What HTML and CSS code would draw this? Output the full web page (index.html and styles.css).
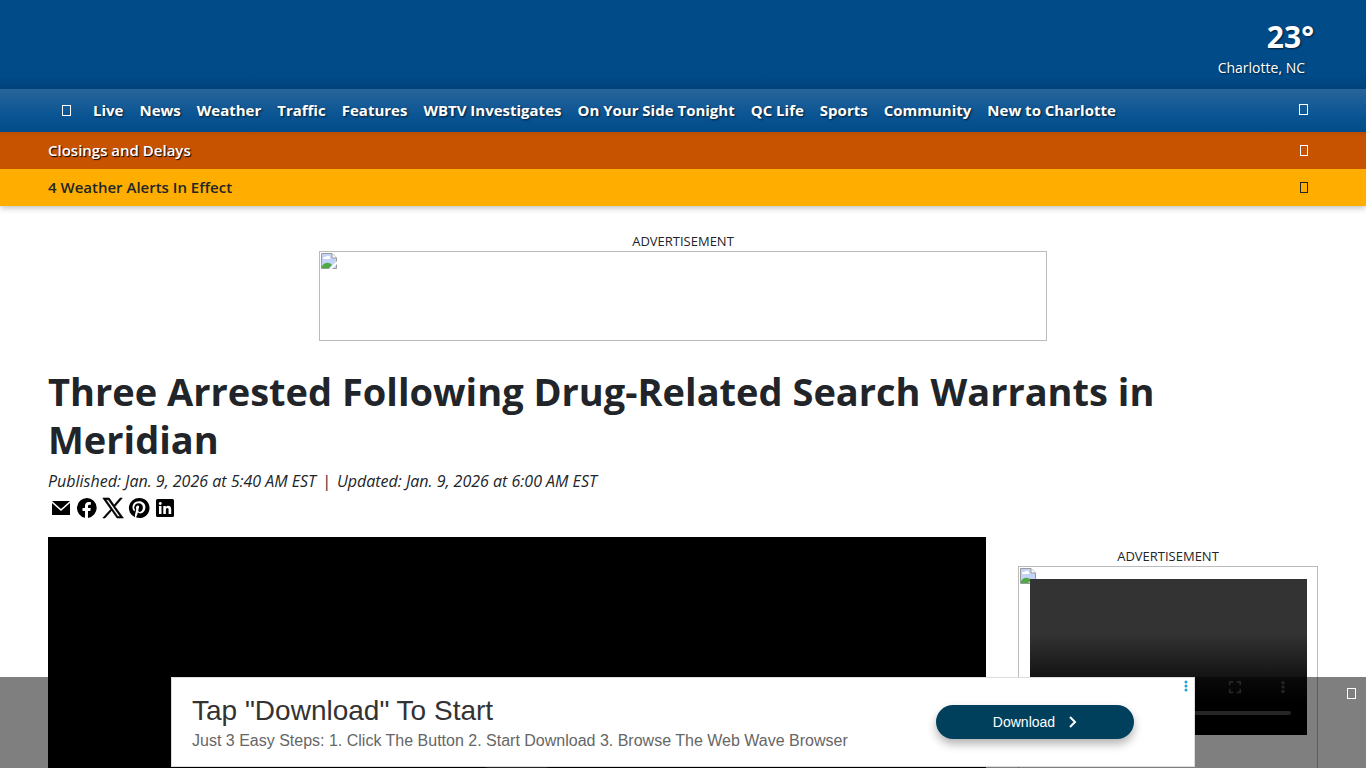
FILE: index.html
```html
<!DOCTYPE html>
<html lang="en">
<head>
  <meta charset="UTF-8">
  <meta name="viewport" content="width=device-width, initial-scale=1.0">
  <title>Three Arrested Following Drug-Related Search Warrants in Meridian</title>
  <link rel="stylesheet" href="styles.css">
</head>
<body>
  <!-- Header Section -->
  <header class="site-header">
    <div class="masthead">
      <a href="#" class="weather">
        <span class="temp">23°</span>
        <span class="city">Charlotte, NC</span>
      </a>
    </div>
    <nav class="navbar">
      <button class="icon-btn menu-btn" aria-label="Menu"><span class="glyph"></span></button>
      <div class="nav-links">
        <a href="#">Live</a>
        <a href="#">News</a>
        <a href="#">Weather</a>
        <a href="#">Traffic</a>
        <a href="#">Features</a>
        <a href="#">WBTV Investigates</a>
        <a href="#">On Your Side Tonight</a>
        <a href="#">QC Life</a>
        <a href="#">Sports</a>
        <a href="#">Community</a>
        <a href="#">New to Charlotte</a>
      </div>
      <button class="icon-btn search-btn" aria-label="Search"><span class="glyph"></span></button>
    </nav>
    <a href="#" class="alert closings">
      <span>Closings and Delays</span>
      <span class="glyph small"></span>
    </a>
    <a href="#" class="alert weather-alert">
      <span>4 Weather Alerts In Effect</span>
      <span class="glyph small"></span>
    </a>
  </header>

  <main class="page">
    <section class="ad leaderboard">
      <div class="ad-label">ADVERTISEMENT</div>
      <div class="ad-box">
        <svg class="broken" viewBox="0 0 16 16" aria-hidden="true">
          <path d="M0.500 0.500H11L15.500 5V15.500H0.500Z" fill="#c5d4f6" stroke="#9a9a9a"/>
          <path d="M2 6a2 2 0 0 1 3-2 2 2 0 0 1 4 2z" fill="#fff"/>
          <path d="M1 15v-2c3-4 7-4 10-1l-3 3z" fill="#4fa943"/>
          <path d="M11 0.500V5h4.500" fill="#fff" stroke="#9a9a9a"/>
          <path d="M8 16l8-8v3l-5 5z" fill="#fff"/>
        </svg>
      </div>
    </section>

    <h1>Three Arrested Following Drug-Related Search Warrants in Meridian</h1>
    <p class="byline"><span>Published: Jan. 9, 2026 at 5:40 AM EST</span><span class="divider">|</span><span>Updated: Jan. 9, 2026 at 6:00 AM EST</span></p>

    <div class="share">
      <a href="#" aria-label="Email">
        <svg viewBox="0 0 24 24"><path d="M3 5h18L12 13z"/><path d="M3 7l9 8 9-8v12H3z"/></svg>
      </a>
      <a href="#" aria-label="Facebook">
        <svg viewBox="0 0 24 24"><path d="M12 2a10 10 0 0 0-2 19.800V15H7.500v-3H10V9.800C10 7.300 11.500 6 13.700 6c1.100 0 2.200.2 2.200.2v2.500h-1.300c-1.200 0-1.600.7-1.600 1.500V12h2.800l-.5 3H13v6.900A10 10 0 0 0 12 2z"/></svg>
      </a>
      <a href="#" aria-label="X">
        <svg viewBox="0 0 24 24"><path stroke="#000" stroke-width=".6" d="M14 10.500 21.300 2h-2.200l-6 7.100L8.200 2H1.800l7.900 11.300L1.800 22H4l6.700-7.600L16 22h6.400zM5 3.700h2.300L19.100 20.400h-2.300z"/></svg>
      </a>
      <a href="#" aria-label="Pinterest">
        <svg viewBox="0 0 24 24"><path d="M12 2a10 10 0 0 0-4 19.200c-.1-.8-.1-2 .1-2.900l1.200-5s-.3-.6-.3-1.500c0-1.400.8-2.400 1.800-2.400.9 0 1.300.6 1.300 1.400 0 .9-.5 2.100-.8 3.300-.3 1 .5 1.800 1.500 1.800 1.800 0 3.100-1.900 3.100-4.600 0-2.400-1.700-4.100-4.200-4.100-2.800 0-4.500 2.100-4.500 4.300 0 .9.300 1.800.8 2.300l-.4 1.500c-1.300-.6-2.100-2.400-2.100-3.900 0-3.200 2.300-6.100 6.700-6.100 3.500 0 6.200 2.500 6.200 5.800 0 3.500-2.200 6.300-5.200 6.300-1 0-2-.5-2.300-1.200l-.7 2.500c-.2.900-.9 1.900-1.300 2.600A10 10 0 1 0 12 2z"/></svg>
      </a>
      <a href="#" aria-label="LinkedIn">
        <svg viewBox="0 0 24 24"><path fill-rule="evenodd" d="M4.500 3h15A1.500 1.500 0 0 1 21 4.500v15a1.500 1.500 0 0 1-1.500 1.500h-15A1.500 1.500 0 0 1 3 19.500v-15A1.500 1.500 0 0 1 4.500 3zM6 10v8h2.500v-8zM7.200 6a1.500 1.500 0 1 0 .1 3 1.500 1.500 0 0 0-.1-3zM10.300 10v8h2.600v-4c0-1.100.4-1.900 1.400-1.900s1.300.9 1.300 1.900v4h2.600v-4.500c0-2.400-1-3.700-2.900-3.700-1.200 0-2 .6-2.400 1.300V10z"/></svg>
      </a>
    </div>

    <div class="columns">
      <article class="story">
        <div class="player">
          <button class="play" aria-label="Play"></button>
        </div>
      </article>

      <aside class="ad rail">
        <div class="ad-label">ADVERTISEMENT</div>
        <div class="ad-box">
          <svg class="broken" viewBox="0 0 16 16" aria-hidden="true">
            <path d="M0.500 0.500H11L15.500 5V15.500H0.500Z" fill="#c5d4f6" stroke="#9a9a9a"/>
            <path d="M2 6a2 2 0 0 1 3-2 2 2 0 0 1 4 2z" fill="#fff"/>
            <path d="M1 15v-2c3-4 7-4 10-1l-3 3z" fill="#4fa943"/>
            <path d="M11 0.500V5h4.500" fill="#fff" stroke="#9a9a9a"/>
          </svg>
          <div class="mini-player">
            <div class="controls">
              <svg viewBox="0 0 16 16"><path d="M2 6V2h4M10 2h4v4M14 10v4h-4M6 14H2v-4" fill="none" stroke="#4a4a4a" stroke-width="2"/></svg>
              <svg viewBox="0 0 16 16" fill="#4a4a4a"><circle cx="8" cy="3" r="2"/><circle cx="8" cy="8" r="2"/><circle cx="8" cy="13" r="2"/></svg>
            </div>
            <div class="track"></div>
          </div>
        </div>
      </aside>
    </div>
  </main>

  <!-- Sticky banner -->
  <div class="sticky-ad">
    <div class="banner">
      <div class="banner-text">
        <div class="banner-title">Tap "Download" To Start</div>
        <div class="banner-sub">Just 3 Easy Steps: 1. Click The Button 2. Start Download 3. Browse The Web Wave Browser</div>
      </div>
      <button class="download">
        Download
        <svg viewBox="0 0 8 12"><path d="M1 1l5 5-5 5" fill="none" stroke="#fff" stroke-width="2"/></svg>
      </button>
      <svg class="ad-choices" viewBox="0 0 4 12"><circle cx="2" cy="2" r="1.500"/><circle cx="2" cy="6" r="1.500"/><circle cx="2" cy="10" r="1.500"/></svg>
    </div>
    <button class="close-btn" aria-label="Close"><span class="glyph"></span></button>
  </div>
</body>
</html>
```
FILE: styles.css
```css
* {
  box-sizing: border-box;
}
html {
  scrollbar-width: none;
}
body {
  margin: 0;
  font-family: "Open Sans", "Noto Sans", sans-serif;
  font-size: 16px;
  line-height: 24px;
  color: #212529;
  background-color: #fff;
}
a {
  color: inherit;
  text-decoration: none;
}
button {
  padding: 0;
  border: none;
  background: none;
  font: inherit;
  color: inherit;
  cursor: pointer;
}

/* Header styling */
.site-header {
  color: #fff;
  background-color: #004b88;
  box-shadow: 0 2px 6px rgba(0, 0, 0, 0.25);
}
.masthead {
  height: 89px;
  padding: 19px 52px 0 48px;
  display: flex;
  justify-content: flex-end;
  background: linear-gradient(#004b88 85%, #00427a);
}
.weather {
  display: flex;
  flex-direction: column;
  align-items: flex-end;
  text-shadow: 1px 1px 2px rgba(0, 0, 0, 0.6);
}
.temp {
  font-size: 30px;
  line-height: 36px;
  font-weight: bold;
}
.city {
  padding-right: 9px;
  font-size: 14px;
  line-height: 26px;
}
.navbar {
  height: 43px;
  padding: 0 48px;
  display: flex;
  align-items: center;
  background: linear-gradient(#28649a, #0b5594 60%, #004b88);
}
.nav-links {
  flex: 1;
  display: flex;
  gap: 16px;
  padding-bottom: 2px;
  font-size: 15px;
  font-weight: bold;
  white-space: nowrap;
  text-shadow: 1px 1px 2px rgba(0, 0, 0, 0.7);
}
.icon-btn {
  display: flex;
}
.menu-btn {
  padding: 0 22px 0 14px;
}
.search-btn {
  padding: 0 10px 2px 0;
}
.glyph {
  display: block;
  width: 9px;
  height: 11px;
  border: 1px solid currentColor;
}
.glyph.small {
  width: 8px;
}
.alert {
  height: 37px;
  padding: 0 58px 1px 48px;
  display: flex;
  align-items: center;
  justify-content: space-between;
  font-size: 15px;
  font-weight: 600;
}
.closings {
  background: linear-gradient(#b84d00, #c75300 15%);
  text-shadow: 1px 1px 1px #000;
}
.weather-alert {
  color: #212529;
  background-color: #ffae00;
}

/* Page */
.page {
  padding: 26px 48px 0;
}
.ad-label {
  font-size: 13px;
  line-height: 19px;
  text-align: center;
}
.ad-box {
  position: relative;
  border: 1px solid #bbb;
}
.broken {
  position: absolute;
  top: 1px;
  left: 1px;
  width: 16px;
  height: 16px;
}
.leaderboard .ad-box {
  max-width: 728px;
  height: 90px;
  margin: 0 auto;
}
h1 {
  margin: 26px 0 6px;
  font-size: 38px;
  line-height: 48px;
  font-weight: bold;
}
.byline {
  margin: 0;
  font-size: 16px;
  font-style: italic;
}
.divider {
  margin: 0 6px;
}
.share {
  display: flex;
  gap: 2px;
  padding: 3px 1px 17px;
}
.share svg {
  display: block;
  width: 24px;
  height: 24px;
}
.columns {
  display: flex;
  align-items: flex-start;
  gap: 32px;
}
.story {
  flex: 1;
}
.player {
  aspect-ratio: 16 / 9;
  display: flex;
  align-items: center;
  justify-content: center;
  background-color: #000;
}
.play {
  width: 90px;
  height: 70px;
  border-radius: 22px;
  background-color: #444;
}
.rail {
  width: 300px;
  padding-top: 10px;
}
.rail .ad-box {
  height: 600px;
  padding: 12px 10px 0 11px;
}
.mini-player {
  position: relative;
  height: 156px;
  padding: 0 16px 20px;
  display: flex;
  flex-direction: column;
  justify-content: flex-end;
  background: linear-gradient(#333 35%, #000 80%);
}
.controls {
  display: flex;
  justify-content: flex-end;
  gap: 34px;
  padding: 0 1px 17px;
}
.controls svg {
  width: 14px;
  height: 14px;
}
.track {
  height: 4px;
  border-radius: 2px;
  background-color: #4a4a4a;
}

/* Sticky banner */
.sticky-ad {
  position: fixed;
  left: 0;
  right: 0;
  bottom: 0;
  height: 91px;
  display: flex;
  justify-content: center;
  background-color: rgba(0, 0, 0, 0.5);
}
.banner {
  position: relative;
  width: 1024px;
  height: 90px;
  padding: 0 60px 0 20px;
  display: flex;
  align-items: center;
  justify-content: space-between;
  border: 1px solid #ddd;
  background-color: #fff;
  font-family: "Liberation Sans", Arial, sans-serif;
}
.banner-text {
  padding-top: 4px;
}
.banner-title {
  font-size: 28px;
  line-height: 34px;
  color: #333;
}
.banner-sub {
  font-size: 16px;
  line-height: 26px;
  color: #666;
}
.download {
  width: 198px;
  height: 34px;
  display: flex;
  align-items: center;
  justify-content: center;
  gap: 14px;
  border-radius: 17px;
  background-color: #00405c;
  color: #fff;
  font-size: 14px;
  box-shadow: 0 5px 10px rgba(0, 0, 0, 0.3);
}
.download svg {
  width: 8px;
  height: 12px;
}
.ad-choices {
  position: absolute;
  top: 2px;
  right: 6px;
  width: 4px;
  height: 12px;
  fill: #1da1d6;
}
.close-btn {
  position: absolute;
  top: 11px;
  right: 10px;
  color: #fff;
}
```
